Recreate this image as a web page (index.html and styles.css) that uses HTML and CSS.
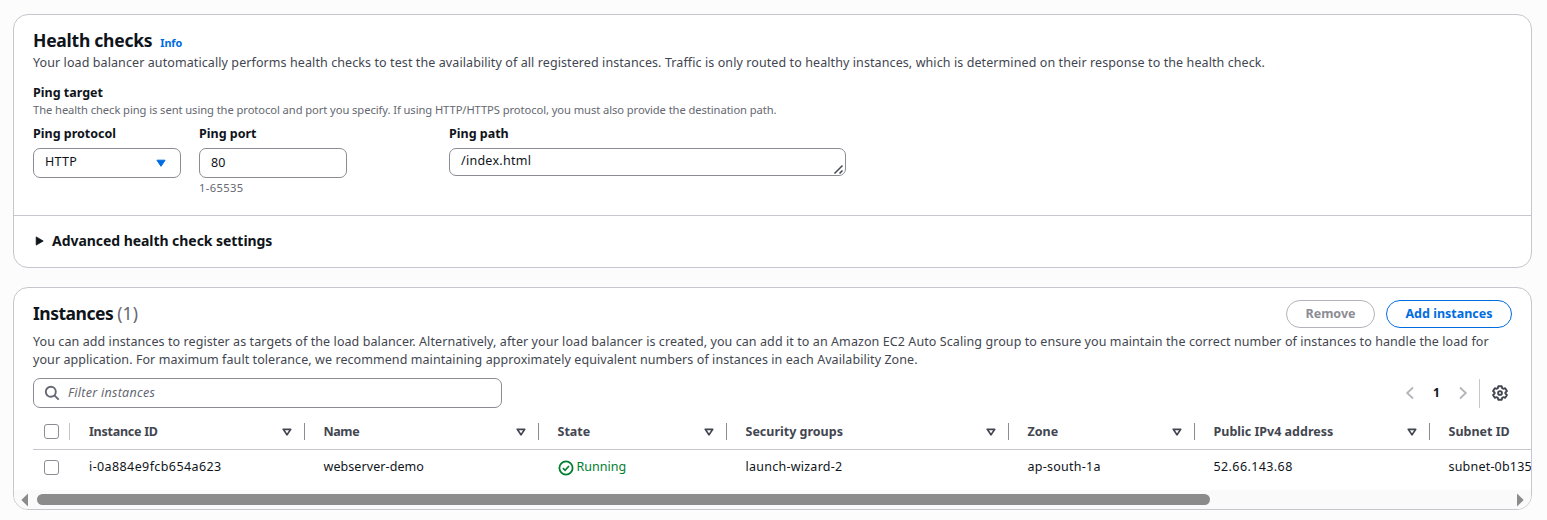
FILE: index.html
```html
<!DOCTYPE html>
<html lang="en">
<head>
<meta charset="utf-8">
<title>Health checks</title>
<link rel="stylesheet" href="styles.css">
</head>
<body>
<main class="page">
  <section class="card health">
    <div class="health-body">
      <header class="title-row">
        <h2 class="title t-health">Health checks</h2>
        <a class="info">Info</a>
      </header>
      <p class="lead l1">Your load balancer automatically performs health checks to test the availability of all registered instances. Traffic is only routed to healthy instances, which is determined on their response to the health check.</p>
      <h3 class="label target">Ping target</h3>
      <p class="hint target-hint">The health check ping is sent using the protocol and port you specify. If using HTTP/HTTPS protocol, you must also provide the destination path.</p>
      <div class="fields">
        <div class="field protocol">
          <span class="label">Ping protocol</span>
          <div class="control select"><span class="http">HTTP</span><svg width="12" height="9" viewBox="0 0 12 9"><path d="M1.900 1.200h8.200L6 7.300z" fill="#006ce0" stroke="#006ce0" stroke-linejoin="round"/></svg></div>
        </div>
        <div class="field port">
          <span class="label">Ping port</span>
          <div class="control"><span>80</span></div>
          <span class="hint range">1-65535</span>
        </div>
        <div class="field path">
          <span class="label">Ping path</span>
          <div class="control area"><span class="pathtext">/index.html</span><svg class="grip" width="11" height="11" viewBox="0 0 11 11"><path d="M1.500 9.500l8-8M6.500 9.500l3-3" fill="none" stroke="#424650" stroke-width="1.500"/></svg></div>
        </div>
      </div>
    </div>
    <div class="advanced">
      <svg width="10" height="10" viewBox="0 0 10 10"><path d="M1.200.900L8.200 5 1.200 9.100z" fill="#0f141a" stroke="#0f141a" stroke-width=".8" stroke-linejoin="round"/></svg>
      <span class="adv-text">Advanced health check settings</span>
    </div>
  </section>

  <section class="card instances">
    <header class="inst-head">
      <h2 class="title t-inst">Instances <span class="count">(1)</span></h2>
      <div class="actions">
        <button class="btn remove">Remove</button>
        <button class="btn add">Add instances</button>
      </div>
    </header>
    <p class="lead inst-lead"><span class="l2">You can add instances to register as targets of the load balancer. Alternatively, after your load balancer is created, you can add it to an Amazon EC2 Auto Scaling group to ensure you maintain the correct number of instances to handle the load for</span><br><span class="l3">your application. For maximum fault tolerance, we recommend maintaining approximately equivalent numbers of instances in each Availability Zone.</span></p>
    <div class="tools">
      <div class="search">
        <svg width="16" height="16" viewBox="0 0 16 16" fill="none" stroke="#656871" stroke-width="1.900"><circle cx="6.800" cy="6.800" r="5"/><path d="M10.400 10.400l4.300 4.300"/></svg>
        <span class="placeholder">Filter instances</span>
      </div>
      <div class="pager">
        <svg width="10" height="14" viewBox="0 0 10 14" fill="none" stroke="#b4b4bb" stroke-width="1.800"><path d="M8 1.500L2.200 7 8 12.500"/></svg>
        <span class="pageno">1</span>
        <svg width="10" height="14" viewBox="0 0 10 14" fill="none" stroke="#b4b4bb" stroke-width="1.800"><path d="M2 1.500L7.800 7 2 12.500"/></svg>
        <span class="sep"></span>
        <svg width="16" height="16" viewBox="0 0 16 16" fill="none" stroke="#424650" stroke-width="1.900" stroke-linejoin="round"><path d="M6.300 1.200h3.400l.5 2 1 .6 2-.6 1.700 2.900-1.500 1.400v1l1.500 1.400-1.700 2.900-2-.6-1 .6-.5 2H6.300l-.5-2-1-.6-2 .6-1.700-2.900 1.500-1.400v-1L1.100 6.100l1.700-2.900 2 .6 1-.6z"/><circle cx="8" cy="8" r="1.900"/></svg>
      </div>
    </div>
    <div class="table">
      <div class="row head">
        <div class="cell check"><span class="box"></span></div>
        <div class="cell c1"><span class="h-id">Instance ID</span><svg class="sort" viewBox="0 0 10 8"><path d="M1.300 1.300h7.400L5 6.900z"/></svg></div>
        <div class="cell c2"><span class="h-name">Name</span><svg class="sort" viewBox="0 0 10 8"><path d="M1.300 1.300h7.400L5 6.900z"/></svg></div>
        <div class="cell c3"><span>State</span><svg class="sort" viewBox="0 0 10 8"><path d="M1.300 1.300h7.400L5 6.900z"/></svg></div>
        <div class="cell c4"><span>Security groups</span><svg class="sort" viewBox="0 0 10 8"><path d="M1.300 1.300h7.400L5 6.900z"/></svg></div>
        <div class="cell c5"><span>Zone</span><svg class="sort" viewBox="0 0 10 8"><path d="M1.300 1.300h7.400L5 6.900z"/></svg></div>
        <div class="cell c6"><span>Public IPv4 address</span><svg class="sort" viewBox="0 0 10 8"><path d="M1.300 1.300h7.400L5 6.900z"/></svg></div>
        <div class="cell c7"><span>Subnet ID</span></div>
      </div>
      <div class="row data">
        <div class="cell check"><span class="box"></span></div>
        <div class="cell c1"><span class="iid">i-0a884e9fcb654a623</span></div>
        <div class="cell c2"><span class="name">webserver-demo</span></div>
        <div class="cell c3 running"><svg width="16" height="16" viewBox="0 0 16 16" fill="none" stroke="#00802f"><circle cx="8" cy="8" r="6.600" stroke-width="1.800"/><path d="M4.900 8.200l2.200 2.100 3.900-4.300" stroke-width="1.700"/></svg><span>Running</span></div>
        <div class="cell c4"><span class="group">launch-wizard-2</span></div>
        <div class="cell c5"><span class="group">ap-south-1a</span></div>
        <div class="cell c6"><span class="ip">52.66.143.68</span></div>
        <div class="cell c7"><span class="subnet">subnet-0b135</span></div>
      </div>
    </div>
    <div class="scrollbar">
      <svg width="8" height="14" viewBox="0 0 8 14"><path d="M7 .5v13L.3 7z" fill="#8b8b8b"/></svg>
      <div class="track"><div class="thumb"></div></div>
      <svg width="8" height="14" viewBox="0 0 8 14"><path d="M1 .5v13L7.700 7z" fill="#8b8b8b"/></svg>
    </div>
  </section>
</main>
</body>
</html>
```
FILE: styles.css
```css
* { box-sizing: border-box; }
body {
  margin: 0;
  background: #fcfcfd;
  color: #0f141a;
  font: 12.5px/20px "Noto Sans", "Open Sans", sans-serif;
  overflow: hidden;
}
h2, h3, p { margin: 0; }
svg { flex: none; display: block; }
.page { padding: 14px 15px 0 13px; height: 520px; }
.card {
  background: #fff;
  border: 1px solid #c6c6cd;
  border-radius: 15px;
  overflow: hidden;
}
.health { height: 254px; margin-bottom: 19px; }
.health-body { height: 201px; padding: 13px 19px 0; border-bottom: 1px solid #c6c6cd; }
.title-row { display: flex; align-items: baseline; gap: 8px; height: 26px; }
.title { font-size: 17.5px; line-height: 24px; font-weight: 700; white-space: nowrap; letter-spacing: -.25px; }
.info { color: #006ce0; font-size: 10.800px; font-weight: 700; line-height: 16px; letter-spacing: -.1px; }
.lead { color: #424650; line-height: 18px; white-space: nowrap; }
.l1 { letter-spacing: .091px; }
.l2 { letter-spacing: .084px; }
.l3 { letter-spacing: .074px; }
.label { font-weight: 700; font-size: 12.5px; line-height: 18px; white-space: nowrap; }
.target { margin-top: 12px; }
.hint { color: #656871; font-size: 11.200px; line-height: 16px; white-space: nowrap; letter-spacing: -.078px; }
.fields { display: flex; margin-top: 7px; }
.field { display: flex; flex-direction: column; }
.protocol { width: 148px; margin-right: 18px; }
.port { width: 148px; margin-right: 102px; }
.path { width: 397px; }
.control {
  display: flex; align-items: center; height: 30px; margin-top: 5px;
  padding: 0 11px; border: 1px solid #8c8c94; border-radius: 7px; background: #fff;
}
.select { justify-content: space-between; padding-right: 13px; }
.http { margin-top: -2px; letter-spacing: .3px; }
.area { height: 28px; padding-right: 1px; justify-content: space-between; }
.pathtext { margin-top: -3px; letter-spacing: .27px; }
.grip { align-self: flex-end; }
.range { margin-top: 2px; letter-spacing: .35px; }
.advanced { display: flex; align-items: center; gap: 7px; height: 50px; padding-left: 21px; font-size: 14px; font-weight: 700; }
.adv-text { letter-spacing: -.05px; }

.instances { height: 223px; display: flex; flex-direction: column; }
.instances > * { flex: none; }
.inst-head { display: flex; justify-content: space-between; padding: 12px 19px 0; height: 45px; }
.t-inst { line-height: 26px; letter-spacing: -.5px; }
.count { font-weight: 400; color: #656871; letter-spacing: .1px; }
.actions { display: flex; gap: 11px; }
.btn {
  height: 28px; padding: 0; border-radius: 14px; background: #fff;
  font: 700 12.5px/20px "Noto Sans", "Open Sans", sans-serif;
}
.remove { width: 89px; border: 1px solid #b4b4bb; color: #8c8c94; }
.add { width: 126px; border: 1px solid #006ce0; color: #006ce0; }
.inst-lead { padding-left: 19px; height: 45px; }
.tools { display: flex; justify-content: space-between; padding: 0 23px 0 19px; height: 30px; }
.search {
  display: flex; align-items: center; gap: 8px; width: 469px; height: 30px; padding-left: 10px;
  border: 1px solid #8c8c94; border-radius: 7px;
}
.placeholder { font-style: italic; color: #656871; margin-top: -1px; letter-spacing: .28px; }
.pager { display: flex; align-items: center; }
.pageno { width: 43px; text-align: center; font-weight: 700; font-size: 12px; }
.sep { width: 1px; height: 29px; background: #c6c6cd; margin: 0 12px 0 11px; }
.table { margin-left: 19px; height: 82px; }
.row { display: flex; }
.head { height: 42px; padding-top: 6px; border-bottom: 1px solid #c6c6cd; color: #424650; font-weight: 700; }
.data { height: 35px; }
.data .cell > span:not(.box) { margin-top: -1px; }
.cell { display: flex; align-items: center; flex: none; padding-left: 18.500px; white-space: nowrap; }
.cell.c1 { padding-left: 19px; }
.cell.check { padding-left: 11px; width: 37px; }
.box { width: 15px; height: 15px; border: 1px solid #8c8c94; border-radius: 3px; }
.head .cell { position: relative; justify-content: space-between; padding-right: 13.500px; }
.head .cell::after { content: ""; position: absolute; right: 0; top: 9px; width: 1px; height: 17px; background: #8c8c94; }
.head .check { padding-right: 0; }
.head .check::after { background: #c6c6cd; }
.head .c7::after { display: none; }
.sort { width: 10px; height: 8px; fill: none; stroke: #424650; stroke-width: 1.700; stroke-linejoin: round; }
.h-id { letter-spacing: -.25px; }
.h-name { letter-spacing: -.4px; }
.c1 { width: 235px; }
.c2 { width: 234px; }
.c3 { width: 188px; }
.c4 { width: 282px; }
.c5 { width: 186px; }
.c6 { width: 235px; }
.c7 { width: 200px; }
.iid { letter-spacing: .4px; }
.name { letter-spacing: .08px; }
.group { letter-spacing: .25px; }
.ip { letter-spacing: .4px; }
.subnet { letter-spacing: .2px; }
.running { gap: 3px; color: #00802f; }
.scrollbar { display: flex; align-items: center; gap: 8px; height: 19px; padding: 0 7px; background: #fafafa; }
.track { flex: 1; }
.thumb { width: 1173px; height: 11px; border-radius: 6px; background: #8b8b8b; }
```
